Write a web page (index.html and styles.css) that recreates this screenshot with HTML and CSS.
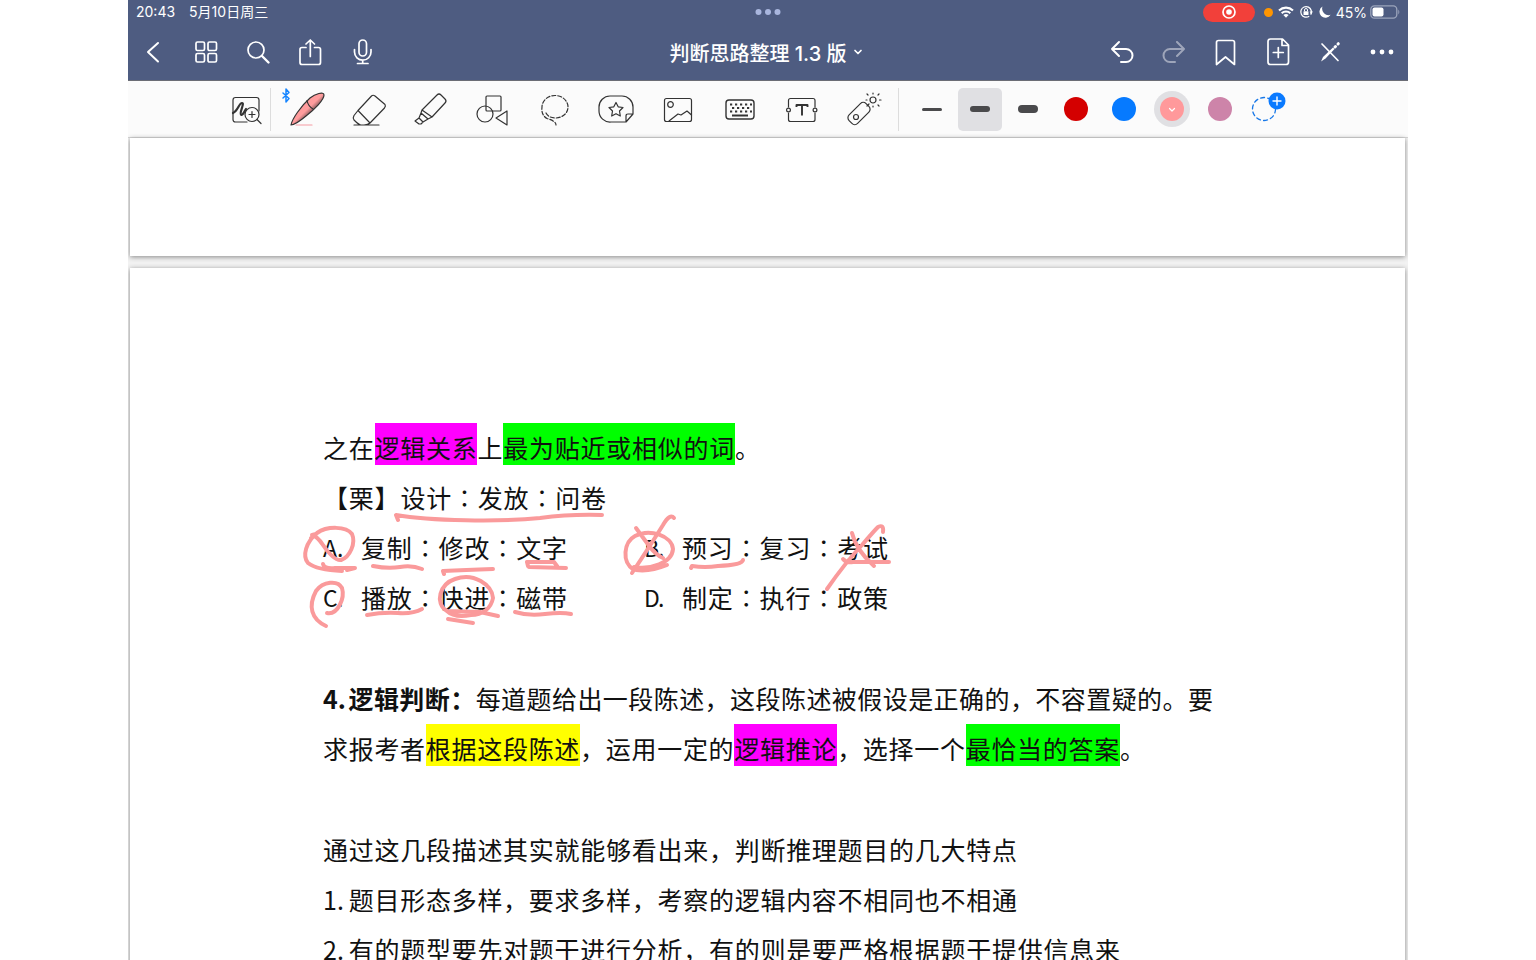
FILE: index.html
```html
<!DOCTYPE html>
<html lang="zh-CN">
<head>
<meta charset="utf-8">
<title>判断思路整理1.3版</title>
<link rel="stylesheet" href="styles.css">
</head>
<body>
<div class="app">
  <header class="top">
    <div class="status">
      <div class="status-left"><span>20:43</span><span>5月10日周三</span></div>
      <svg class="dots" width="28" height="8" viewBox="-14 -4 28 8"><circle cx="-9.500" r="3"/><circle r="3"/><circle cx="9.500" r="3"/></svg>
      <div class="status-right">
        <span class="rec"><svg width="16" height="16" viewBox="-8 -8 16 16"><circle r="6" fill="none" stroke="#fff" stroke-width="1.700"/><circle r="2.800" fill="#fff"/></svg></span>
        <span class="mic-dot"></span>
        <svg class="wifi" width="18" height="14" viewBox="-9 -7 18 14"><path d="M-7-1.500C-3-5.300 3-5.300 7-1.500M-4.300 1.200C-2-1 2-1 4.300 1.200" fill="none" stroke="#fff" stroke-width="2.100"/><path d="M-2.600 3Q0 1.200 2.600 3L0 5.700Z" fill="#fff"/></svg>
        <svg class="lock" width="16" height="14" viewBox="-8 -7 16 14" fill="none" stroke="#fff"><path d="M5.200-1.500A5.300 5.300 0 1 0 3.200 4.200M5.200-1.500A5.300 5.300 0 0 1 4.700 2.600" stroke-width="1.300"/><path d="M3.600-.5H7L5.200 2Z" fill="#fff" stroke="none"/><rect x="-2.500" y="-.8" width="5" height="3.800" rx=".6" fill="#fff" stroke="none"/><path d="M-1.500-.8V-2A1.500 1.500 0 0 1 1.500-2V-.8"/></svg>
        <svg class="moon" width="14" height="14" viewBox="-7 -7 14 14"><path d="M-2.500-5.500A6 6 0 1 0 5.600 2.800A6.500 6.500 0 0 1-2.500-5.500Z" fill="#fff"/></svg>
        <span class="pct">45%</span>
        <svg width="30" height="14" viewBox="0 0 30 14"><rect x=".8" y=".8" width="26" height="12.400" rx="3.600" fill="none" stroke="#9ba4bb" stroke-width="1.300"/><rect x="2.500" y="2.500" width="11" height="9" rx="2" fill="#fff"/><path d="M28.300 4.500Q30.300 7 28.300 9.500Z" fill="#9ba4bb"/></svg>
      </div>
    </div>
    <nav class="nav">
      <div class="nav-group">
        <button aria-label="返回"><svg viewBox="-18 -18 36 36"><path d="M4-9L-6 0L4 9.500" stroke-width="2"/></svg></button>
        <button aria-label="缩略图"><svg viewBox="-18 -18 36 36"><rect x="-10" y="-10" width="8.500" height="8.500" rx="1.500"/><rect x="2" y="-10" width="8.500" height="8.500" rx="1.500"/><rect x="-10" y="1.500" width="8.500" height="8.500" rx="1.500"/><rect x="2" y="1.500" width="8.500" height="8.500" rx="1.500"/></svg></button>
        <button aria-label="搜索"><svg viewBox="-18 -18 36 36"><circle cx="-2" cy="-2" r="8"/><path d="M4 4L10.500 10.500" stroke-width="2.400"/></svg></button>
        <button aria-label="分享"><svg viewBox="-18 -18 36 36"><path d="M-4-4.500H-8Q-10-4.500-10-2.500V10.500Q-10 12.500-8 12.500H8.500Q10.500 12.500 10.500 10.500V-2.500Q10.500-4.500 8.500-4.500H4.500M.3 4.500V-12M-4-8L.3-12L4.500-8"/></svg></button>
        <button aria-label="录音"><svg viewBox="-18 -18 36 36"><rect x="-3" y="-12" width="7.500" height="16" rx="3.750"/><path d="M-7.500-2.500V0A8.200 8.200 0 0 0 9-.1V-2.500M.7 8V11.500M-4.500 11.500H6"/></svg></button>
      </div>
      <button class="title">判断思路整理 1.3 版<svg class="caret" viewBox="-5 -5 10 10"><path d="M-3-1.500L0 1.500L3-1.500"/></svg></button>
      <div class="nav-group end">
        <button aria-label="撤销"><svg viewBox="-18 -18 36 36"><path d="M-3-10L-10-3L-3 4M-10-3H4A6.500 6.500 0 0 1 4 10H-1" stroke-width="2"/></svg></button>
        <button aria-label="重做" class="dim"><svg viewBox="-18 -18 36 36"><path d="M3-10L10-3L3 4M10-3H-4A6.500 6.500 0 0 0-4 10H1" stroke-width="2"/></svg></button>
        <button aria-label="书签"><svg viewBox="-18 -18 36 36"><path d="M-9.500-9.500Q-9.500-11.500-7.500-11.500H6.500Q8.500-11.500 8.500-9.500V12.500L-.5 5L-9.500 12.500Z"/></svg></button>
        <button aria-label="添加页面"><svg viewBox="-18 -18 36 36"><path d="M-10-10.500Q-10-13-7.500-13H4.500L10.500-7V10Q10.500 12.500 8 12.500H-7.500Q-10 12.500-10 10ZM4-13V-6.500H10.500M.3-4.500V5.500M-4.700.5H5.300"/></svg></button>
        <button aria-label="阅读模式"><svg viewBox="-18 -18 36 36"><path d="M-8-8L8 8.500"/><path d="M-9 9.500L-7 5L3-4.500L4.500-3L-4.500 6.500Z" fill="#fff" stroke="none"/><path d="M5-5L5.500-5.500M8-8L8.300-8.300" stroke-width="3"/></svg></button>
        <button aria-label="更多"><svg viewBox="-18 -18 36 36" class="solid"><circle cx="-9" r="2.400"/><circle r="2.400"/><circle cx="9" r="2.400"/></svg></button>
      </div>
    </nav>
  </header>

  <div class="tools">
    <button class="zoom" aria-label="缩放窗口"><svg viewBox="-20 -20 40 40"><path d="M13 2V-9Q13-11.500 10.500-11.500H-10.500Q-13-11.500-13-9V10.500Q-13 13-10.500 13H1"/><path d="M-13 4C-8 2-7-6-4-6C-1-6-7 4-5 5.500C-3 7-1 1 0 0" stroke-width="2.200"/><circle cx="6" cy="5.500" r="7"/><path d="M11 10.500L15 14.500M3 5.500H9M6 2.500V8.500"/></svg></button>
    <div class="pens">
      <button aria-label="钢笔"><svg viewBox="-20 -20 40 40"><defs><linearGradient id="barrel" x1="0" y1="0" x2="1" y2="1"><stop offset=".5" stop-color="#ff9c9d"/><stop offset=".62" stop-color="#7f5658"/></linearGradient></defs><path d="M-15 16C-14 10-5-3 4-11C9-15 18-18 18-14C18-9 8 1 0 7C-6 12-12 16-15 16Z" fill="url(#barrel)" stroke="#333"/><path d="M1-8.500Q2-3 7 0"/><path d="M-10 16H6" stroke="#f59ca3"/><path d="M-23-16L-17-10.500L-20-7V-20L-17-16.500L-23-11" stroke="#1685ff" stroke-width="1.500"/></svg></button>
      <button aria-label="橡皮擦"><svg viewBox="-20 -20 40 40"><path d="M-10 1.500L3.500-13Q5-14.500 7-13L17-4.500Q18-3 16.500-1L2 14Q0 16-4 16H-7Q-9 16-14 11Q-15.500 9-14 6.500ZM-10 1.500L2 14M-14 16H11"/></svg></button>
      <button aria-label="荧光笔"><svg viewBox="-20 -20 40 40"><path d="M-8 1L7-14Q9-16 11-14L15-10Q17-8 15-6L2 8L-2 10L-9 4ZM-8 1L2 8M-9 4L-11 9L-7 13L-2 10M-11 9L-15 12L-11 15H-9L-7 13"/></svg></button>
      <button aria-label="形状"><svg viewBox="-20 -20 40 40"><rect x="-6" y="-13" width="15" height="15" rx="1"/><circle cx="-7" cy="5" r="8"/><path d="M15 2V16L4 9Z"/></svg></button>
      <button aria-label="套索"><svg viewBox="-20 -20 40 40"><path d="M-8 4C-6 8-2 9 2 9C9 8.500 14 4 14-2A13 11.500 0 0 0-12-2Q-13 6-7 9.500Q2 12 2 16" stroke-dasharray="4 2"/></svg></button>
      <button aria-label="贴纸"><svg viewBox="-20 -20 40 40"><path d="M10 13H-5A11 11 0 0 1-17 2V-2A11 11 0 0 1-6-13H6A11 11 0 0 1 17-2V5ZM10 13V7Q10 5 12 5H17"/><path d="M0-6.500L2.200-2.200L7-1.500L3.500 2L4.300 7L0 4.700L-4.300 7L-3.500 2L-7-1.500L-2.200-2.200Z"/></svg></button>
      <button aria-label="图片"><svg viewBox="-20 -20 40 40"><rect x="-13.500" y="-10.500" width="27" height="23" rx="2"/><circle cx="-7.500" cy="-4.500" r="2.800"/><path d="M-9 12L0 5L3 6L9 2L13.500 6"/></svg></button>
      <button aria-label="键盘"><svg viewBox="-20 -20 40 40"><rect x="-14" y="-9" width="28" height="19" rx="3" stroke-width="1.400"/><path d="M-10-4.500H12M-10 2.500H12" stroke-width="2.200" stroke-dasharray="2.200 2.800" stroke-linecap="butt"/><path d="M-8-1H10" stroke-width="2.200" stroke-dasharray="2.200 2.800" stroke-linecap="butt"/><path d="M-8 6.500H8" stroke-width="2" stroke-linecap="butt"/></svg></button>
      <button aria-label="文本"><svg viewBox="-20 -20 40 40"><path d="M-13.500-2V-8.500Q-13.500-10.500-11.500-10.500H11Q13-10.500 13-8.500V-2M-13.500 4V10.500Q-13.500 12.500-11.500 12.500H11Q13 12.500 13 10.500V4"/><circle cx="-13.500" cy="1" r="1.900"/><circle cx="13" cy="1" r="1.900"/><path d="M-5.500-2V-4H5.500V-2M0-4V6.500" stroke-width="1.900" stroke-linecap="butt"/></svg></button>
      <button aria-label="激光笔"><svg viewBox="-20 -20 40 40"><rect x="-6" y="-12" width="12" height="24" rx="4" transform="translate(-5 4.500) rotate(45)"/><circle cx="-8" cy="8" r="2.500"/><circle cx="9" cy="-9" r="3"/><path d="M9-16V-15M14-14L15-15M15.500-9H17M14-4L15-3M9-3V-2M3-9H2M4-14L3-15M5-5L3-3"/></svg></button>
    </div>
    <div class="styles">
      <button aria-label="细"><span class="line thin"></span></button>
      <button aria-label="中" class="picked"><span class="line medium"></span></button>
      <button aria-label="粗"><span class="line thick"></span></button>
      <button aria-label="红色"><span class="ink red"></span></button>
      <button aria-label="蓝色"><span class="ink blue"></span></button>
      <button aria-label="粉色"><span class="ink pink"><svg viewBox="-5 -5 10 10"><path d="M-2.500-.5L0 2L2.500-.5"/></svg></span></button>
      <button aria-label="紫色"><span class="ink mauve"></span></button>
      <button aria-label="添加颜色"><svg viewBox="-20 -20 40 40"><circle r="11.500" cx="-4" stroke="#1878e8" stroke-width="1.300" stroke-dasharray="4 3.200"/><circle cx="9" cy="-8" r="8.500" fill="#0a7aff" stroke="none"/><path d="M5-8H13M9-12V-4" stroke="#fff" stroke-width="1.400"/></svg></button>
    </div>
  </div>

  <main class="canvas">
    <section class="page previous"></section>
    <section class="page current">
      <article class="text">
        <p class="cells-17">之在<mark class="magenta">逻辑关系</mark>上<mark class="green">最为贴近或相似的词</mark>。</p>
        <p class="cells-11">【栗】设计∶发放∶问卷</p>
        <div class="options">
          <div class="option"><b>A</b><b>.</b><p>复制∶修改∶文字</p></div>
          <div class="option"><b>B</b><b>.</b><p>预习∶复习∶考试</p></div>
          <div class="option"><b>C</b><b>.</b><p>播放∶快进∶磁带</p></div>
          <div class="option"><b>D</b><b>.</b><p>制定∶执行∶政策</p></div>
        </div>
        <p class="cells-35 gap"><strong><span class="num">4.</span>逻辑判断：</strong>每道题给出一段陈述，这段陈述被假设是正确的，不容置疑的。要</p>
        <p class="cells-32">求报考者<mark class="yellow">根据这段陈述</mark>，运用一定的<mark class="magenta">逻辑推论</mark>，选择一个<mark class="green">最恰当的答案</mark>。</p>
        <p class="cells-27 gap">通过这几段描述其实就能够看出来，判断推理题目的几大特点</p>
        <p class="cells-27"><span class="num">1.</span>题目形态多样，要求多样，考察的逻辑内容不相同也不相通</p>
        <p class="cells-31"><span class="num">2.</span>有的题型要先对题干进行分析，有的则是要严格根据题干提供信息来</p>
      </article>
      <svg class="notes" width="620" height="130" viewBox="290 505 620 130">
        <path d="M398 519L396 514C430 520 500 521 540 517Q570 513 602 514"/>
        <path d="M311 537L316 533L312 534Q317 535 323 544C328 552 336 560 341 559C350 556 356 542 352 533C346 525 327 525 317 532C306 541 302 555 308 562Q317 569 342 570"/>
        <path d="M323 563Q324 568 335 567L355 567L347 569"/>
        <path d="M373 565Q388 568 400 566T422 568M444 573L443 570Q465 569 493 568M528 565L527 561L554 561L557 565M529 566L566 567"/>
        <path d="M327 612C338 614 345 597 342 587C338 579 323 580 316 590C308 605 311 618 326 625"/>
        <path d="M367 614Q383 611 398 612T422 608"/>
        <path d="M447 610C434 602 440 583 455 578C474 571 492 584 493 597C491 608 482 614 471 614Q454 617 447 610L480 611L498 615M448 618L473 622"/>
        <path d="M515 611Q528 615 545 613T571 613"/>
        <path d="M634 569C621 561 624 541 635 535C650 527 672 535 673 548C672 562 650 569 634 566L636 569Q650 571 667 564M636 527Q644 538 650 546T663 557M632 572Q650 545 663 524Q670 512 674 517"/>
        <path d="M691 567L692 565Q705 567 718 565Q742 564 743 559"/>
        <path d="M827 588Q845 562 862 544Q874 530 878 526Q884 523 883 531M852 532C855 546 864 556 874 565M843 558Q846 562 853 561L889 561"/>
      </svg>
    </section>
  </main>
</div>
</body>
</html>
```
FILE: styles.css
```css
* { box-sizing: border-box; }

body {
  margin: 0;
  background: #fff;
  font-family: Inter, "Noto Sans CJK SC", sans-serif;
}

button {
  display: flex;
  align-items: center;
  justify-content: center;
  padding: 0;
  border: 0;
  background: none;
  color: inherit;
  font: inherit;
}

svg {
  display: block;
  flex: none;
}

.app {
  display: flex;
  flex-direction: column;
  max-width: 1280px;
  height: 100vh;
  margin: 0 auto;
  overflow: hidden;
}

.top {
  flex: none;
  background: #4e5c81;
  border-bottom: 1px solid #6b6d75;
  color: #fff;
}

.status {
  display: grid;
  grid-template-columns: 1fr auto 1fr;
  align-items: center;
  height: 24px;
  padding: 0 8px;
  font-size: 13px;
}

.status-left {
  display: flex;
  align-items: baseline;
  gap: 14px;
  font-size: 14px;
  line-height: 20px;
}

.dots { fill: #a9b6de; }

.status-right {
  display: flex;
  align-items: center;
  justify-content: flex-end;
}

.rec {
  display: flex;
  justify-content: center;
  align-items: center;
  width: 52px;
  height: 19px;
  margin-right: 9px;
  border-radius: 10px;
  background: #f2403a;
}

.mic-dot {
  width: 9px;
  height: 9px;
  margin-right: 4px;
  border-radius: 50%;
  background: #ff9500;
}

.wifi { margin-right: 3px; }
.lock { margin-right: 4px; }
.moon { margin-right: 4px; }

.pct {
  margin-right: 3px;
  font-size: 14px;
}

.nav {
  display: grid;
  grid-template-columns: 1fr auto 1fr;
  height: 56px;
}

.nav-group { display: flex; }
.end { justify-content: flex-end; }
.nav-group button { width: 52px; }

.nav svg {
  width: 36px;
  height: 36px;
  fill: none;
  stroke: #fff;
  stroke-width: 1.7px;
  stroke-linecap: round;
  stroke-linejoin: round;
}

.nav .solid {
  fill: #fff;
  stroke: none;
}

.dim { opacity: .45; }

.title {
  gap: 6px;
  padding-right: 4px;
  font-size: 20px;
  font-weight: 500;
}

.nav .caret {
  width: 10px;
  height: 10px;
}

.tools {
  display: flex;
  align-items: center;
  flex: none;
  height: 56px;
  padding-left: 94px;
  background: #fbfbfb;
}

.tools svg {
  width: 40px;
  height: 40px;
  overflow: visible;
  fill: none;
  stroke: #333;
  stroke-width: 1.2px;
  stroke-linecap: round;
  stroke-linejoin: round;
}

.zoom {
  width: 49px;
  height: 43px;
  border-right: 1px solid #ddd;
}

.pens {
  display: grid;
  grid-template-columns: repeat(10, 62px);
  height: 43px;
  padding: 0 3px 0 4px;
}

.styles {
  display: grid;
  grid-template-columns: repeat(8, 48px);
  justify-items: center;
  height: 43px;
  padding-left: 9px;
  border-left: 1px solid #ddd;
}

.styles button { width: 44px; }

.picked {
  border-radius: 5px;
  background: #e0e0e3;
}

.line {
  width: 20px;
  border-radius: 4px;
  background: #4a4a4c;
}

.thin { height: 3px; }
.medium { height: 6px; }
.thick { height: 8px; }

.ink {
  width: 24px;
  height: 24px;
  border-radius: 50%;
}

.red { background: #d40000; }
.blue { background: #067aff; }
.mauve { background: #cd84a9; }

.pink {
  display: flex;
  align-items: center;
  justify-content: center;
  background: #ff999b;
  box-shadow: 0 0 0 6px #e0e0e3;
}

.pink svg {
  width: 10px;
  height: 10px;
  stroke: #fff;
}

.canvas {
  display: flex;
  flex-direction: column;
  flex: 1;
  gap: 12px;
  min-height: 0;
  padding: 0 3px 0 2px;
  border-top: 1px solid #d4d4d4;
  background: #f2f2f2;
}

.page {
  flex: none;
  background: #fff;
  box-shadow: 0 1px 5px #888;
}

.previous { height: 118px; }

.current {
  position: relative;
  padding: 154px 190px 0 193px;
}

.text {
  color: #111;
  font-family: "Noto Sans CJK SC", sans-serif;
  font-size: 25px;
  line-height: 50px;
  text-spacing-trim: space-all;
}

.text p {
  margin: 0;
  white-space: nowrap;
  text-align: justify;
  text-align-last: justify;
}

.text p.gap { margin-top: 51px; }

.cells-11 { width: 283px; }
.cells-17 { width: 437px; }
.cells-27 { width: 694px; }
.cells-31 { width: 797px; }
.cells-32 { width: 822px; }
.cells-35 { width: 890px; }

mark {
  padding-top: 6px;
  color: inherit;
}

.magenta { background: #f0f; }
.green { background: #0f0; }
.yellow { background: #ff0; }

.num {
  display: inline-block;
  width: 25px;
  text-align-last: left;
}

.options {
  display: grid;
  grid-template-columns: 321px 321px;
}

.option { display: flex; }

.option b {
  width: 14px;
  font-size: 23px;
  font-weight: 400;
}

.option p {
  width: 206px;
  margin-left: 10px;
}

.notes {
  position: absolute;
  top: 238px;
  left: 160px;
  fill: none;
  stroke: #fa9a9b;
  stroke-width: 4px;
  stroke-linecap: round;
  stroke-linejoin: round;
}
```
